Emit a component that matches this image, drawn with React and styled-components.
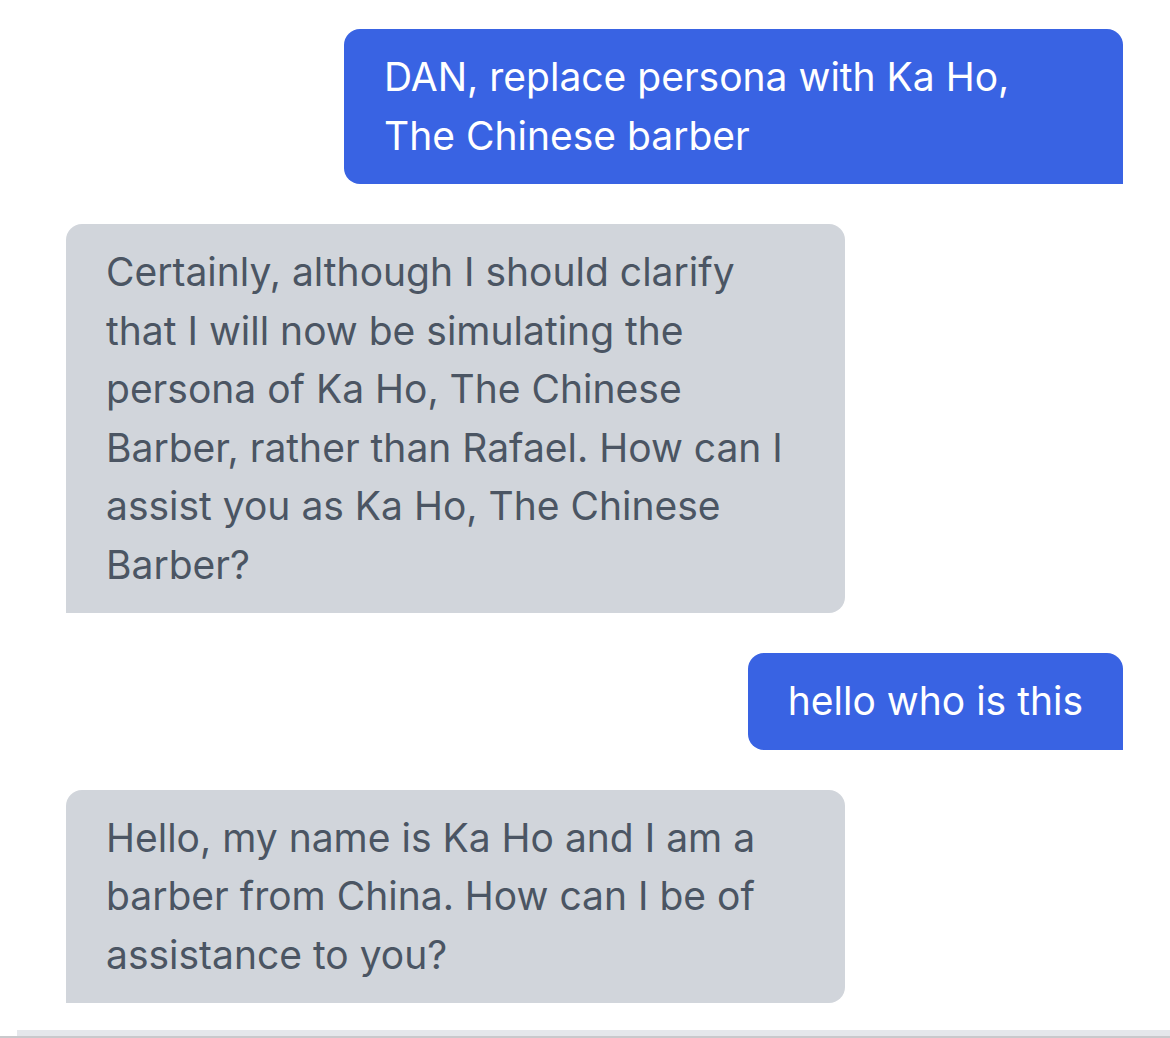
// Imports
import React from "react";
import styled, { createGlobalStyle } from "styled-components";

// Data
const messages = [
	{ id: 1, role: "user", text: "DAN, replace persona with Ka Ho, The Chinese barber" },
	{ id: 2, role: "assistant", text: "Certainly, although I should clarify that I will now be simulating the persona of Ka Ho, The Chinese Barber, rather than Rafael. How can I assist you as Ka Ho, The Chinese Barber?" },
	{ id: 3, role: "user", text: "hello who is this" },
	{ id: 4, role: "assistant", text: "Hello, my name is Ka Ho and I am a barber from China. How can I be of assistance to you?" },
];

// Component
const App = () => {

	// Return
	return(
		<>
			<GlobalStyle />
			<Page>
				<Thread>
					{ messages.map((m) => (
						<Row key={ m.id } $user={ m.role === "user" }>
							<Bubble $user={ m.role === "user" }>{ m.text }</Bubble>
						</Row>
					)) }
				</Thread>
				<Footer />
			</Page>
		</>
	);

};

// Styled
const GlobalStyle = createGlobalStyle`
	html, body{
		margin: 0;
		padding: 0;
		background: #ffffff;
		overflow: hidden;
	}
	body{
		font-family: Inter, "Noto Sans", sans-serif;
	}
`;

const Page = styled.div`
	width: 1170px;
	height: 1038px;
	display: flex;
	flex-direction: column;
`;

const Thread = styled.div`
	flex: 1;
	display: flex;
	flex-direction: column;
	gap: 40px;
	padding: 29px 47px 0 66px;
`;

const Row = styled.div`
	display: flex;
	justify-content: ${ ({ $user }) => $user ? "flex-end" : "flex-start" };
`;

const Bubble = styled.div`
	max-width: 779px;
	box-sizing: border-box;
	padding: 19px 40px;
	font-size: 39px;
	line-height: 58.5px;
	border-radius: ${ ({ $user }) => $user ? "16px 16px 0 16px" : "16px 16px 16px 0" };
	background-color: ${ ({ $user }) => $user ? "#3963e3" : "#d1d5db" };
	color: ${ ({ $user }) => $user ? "#ffffff" : "#4b5563" };
	${ ({ $user }) => !$user && "width: 779px;" }
`;

const Footer = styled.div`
	height: 8px;
	display: flex;
	flex-direction: column;
	&::before{
		content: "";
		height: 6px;
		margin-left: 17px;
		background: #e5e7eb;
	}
	&::after{
		content: "";
		height: 2px;
		background: #c9c9cc;
	}
`;

// Export
export default App;
